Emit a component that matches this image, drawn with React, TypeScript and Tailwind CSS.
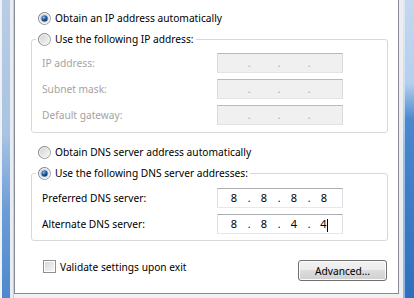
import { useId } from 'react'

const font = { fontFamily: '"Noto Sans", "Open Sans", sans-serif' }

function Radio({ checked = false }: { checked?: boolean }) {
  const id = useId().replace(/:/g, '')
  return (
    <svg width="13" height="13" viewBox="0 0 13 13" className="shrink-0">
      <defs>
        <linearGradient id={`ring${id}`} x1="0" y1="0" x2="1" y2="1">
          <stop offset="0" stopColor="#6f7072" />
          <stop offset="1" stopColor="#a8a9ab" />
        </linearGradient>
        <linearGradient id={`in${id}`} x1="0" y1="0" x2="1" y2="1">
          <stop offset="0" stopColor="#cfd0d1" />
          <stop offset="1" stopColor="#f9f9f9" />
        </linearGradient>
        <radialGradient id={`dot${id}`} cx="0.38" cy="0.32" r="0.7">
          <stop offset="0" stopColor="#8ccbf3" />
          <stop offset="0.45" stopColor="#2a66aa" />
          <stop offset="1" stopColor="#0c2c5c" />
        </radialGradient>
      </defs>
      <circle cx="6.5" cy="6.5" r="6" fill={`url(#in${id})`} stroke={`url(#ring${id})`} strokeWidth="1" />
      <circle cx="6.5" cy="6.5" r="5" fill="none" stroke="#f4f4f4" strokeWidth="0.8" />
      {checked && (
        <>
          <circle cx="6.5" cy="6.5" r="3.8" fill="#9fc7ea" />
          <circle cx="6.5" cy="6.5" r="3" fill={`url(#dot${id})`} />
        </>
      )}
    </svg>
  )
}

function Checkbox() {
  return (
    <span className="box-border flex h-[13px] w-[13px] shrink-0 border border-[#8e8f8f] bg-white p-px">
      <span className="h-full w-full bg-[linear-gradient(135deg,#d7d8d9,#f7f7f7)]" />
    </span>
  )
}

function IpBox({ parts, disabled = false, caret = false }: { parts?: string[]; disabled?: boolean; caret?: boolean }) {
  const vals = parts ?? ['', '', '', '']
  return (
    <div
      className={
        disabled
          ? 'box-border flex h-[20px] w-[126px] items-center border border-[#dadada] border-t-[#b9b9b9] border-b-[#e4e4e4] bg-[#f0f0f0] pl-[4px] text-[#a8a8a8]'
          : 'box-border flex h-[20px] w-[126px] items-center border border-[#dbdfe6] border-t-[#abadb3] border-b-[#e3e9ef] bg-white pl-[4px] text-black'
      }
    >
      {vals.map((v, i) => (
        <div key={i} className="flex items-center">
          <span className="w-[24px] text-center text-[11px] leading-[16px]">
            {v}
            {caret && i === 3 && <span className="inline-block h-[13px] w-px bg-black align-middle" />}
          </span>
          {i < 3 && <span className="w-[6px] text-center leading-[16px]">.</span>}
        </div>
      ))}
    </div>
  )
}

function Row({ label, disabled, children }: { label: string; disabled?: boolean; children: React.ReactNode }) {
  return (
    <div className="flex h-[20px] items-center">
      <span className={`w-[175px] leading-[16px] ${disabled ? 'text-[#a3a3a3]' : 'text-black'}`}>{label}</span>
      {children}
    </div>
  )
}

export default function App() {
  return (
    <div className="flex h-[298px] w-[414px] overflow-hidden text-[10.2px]" style={font}>
      {/* left window frame */}
      <div className="flex h-full w-[14px] shrink-0">
        <div className="w-[2px] bg-[#eef2f7]" />
        <div className="w-[8px] bg-[linear-gradient(to_bottom,#b9cde4_0%,#a9c3e2_45%,#6d9dd6_70%,#4d88cc_100%)]" />
        <div className="w-[3px] bg-[#e8edf3]" />
        <div className="w-px bg-[#c9ced6]" />
      </div>

      {/* dialog body */}
      <div className="flex w-[385px] shrink-0 flex-col bg-[#f0f0f0]">
        <div className="box-border h-[294px] border-x border-b border-[#898c95] bg-white pt-[10px] text-black">
          <div className="ml-[23px] flex h-[16px] items-center gap-[4px] leading-[16px]">
            <Radio checked />
            <span>Obtain an IP address automatically</span>
          </div>

          <fieldset className="mt-[5px] ml-[16px] box-border w-[357px] rounded-[3px] border border-[#d5d9de] px-[4px] pt-[6px] pb-[7px]">
            <legend className="flex h-[16px] items-center gap-[4px] px-[2px] leading-[16px]">
              <Radio />
              <span>Use the following IP address:</span>
            </legend>
            <div className="flex flex-col gap-[6px] pl-[6px]">
              <Row label="IP address:" disabled>
                <IpBox disabled />
              </Row>
              <Row label="Subnet mask:" disabled>
                <IpBox disabled />
              </Row>
              <Row label="Default gateway:" disabled>
                <IpBox disabled />
              </Row>
            </div>
          </fieldset>

          <div className="mt-[11px] ml-[23px] flex h-[16px] items-center gap-[4px] leading-[16px]">
            <Radio />
            <span>Obtain DNS server address automatically</span>
          </div>

          <fieldset className="mt-[5px] ml-[16px] box-border w-[357px] rounded-[3px] border border-[#d5d9de] px-[4px] pt-[7px] pb-[6px]">
            <legend className="flex h-[16px] items-center gap-[4px] px-[2px] leading-[16px]">
              <Radio checked />
              <span>Use the following DNS server addresses:</span>
            </legend>
            <div className="flex flex-col gap-[6px] pl-[6px]">
              <Row label="Preferred DNS server:">
                <IpBox parts={['8', '8', '8', '8']} />
              </Row>
              <Row label="Alternate DNS server:">
                <IpBox parts={['8', '8', '4', '4']} caret />
              </Row>
            </div>
          </fieldset>

          <div className="mt-[19px] flex items-start justify-between pr-[11px] pl-[28px]">
            <div className="flex h-[13px] items-center gap-[4px] leading-[16px]">
              <Checkbox />
              <span>Validate settings upon exit</span>
            </div>
            <button className="box-border h-[21px] w-[89px] rounded-[3px] border border-[#707070] bg-[linear-gradient(to_bottom,#f2f2f2_0%,#ebebeb_50%,#dddddd_50%,#cfcfcf_100%)] leading-[16px] text-black shadow-[inset_0_0_0_1px_#fbfbfb]">
              Advanced...
            </button>
          </div>
        </div>
      </div>

      {/* right window frame */}
      <div className="flex h-full w-[15px] shrink-0">
        <div className="w-[4px] bg-[#eceef1]" />
        <div className="w-[2px] bg-[linear-gradient(to_bottom,#dfe9f5_0%,#cfdff0_30%,#9cc0e6_50%,#8fb7e2_100%)]" />
        <div className="w-[9px] bg-[linear-gradient(to_bottom,#c3d8ef_0%,#b4cfee_28%,#4a89cf_40%,#2f6fbd_100%)]" />
      </div>
    </div>
  )
}
